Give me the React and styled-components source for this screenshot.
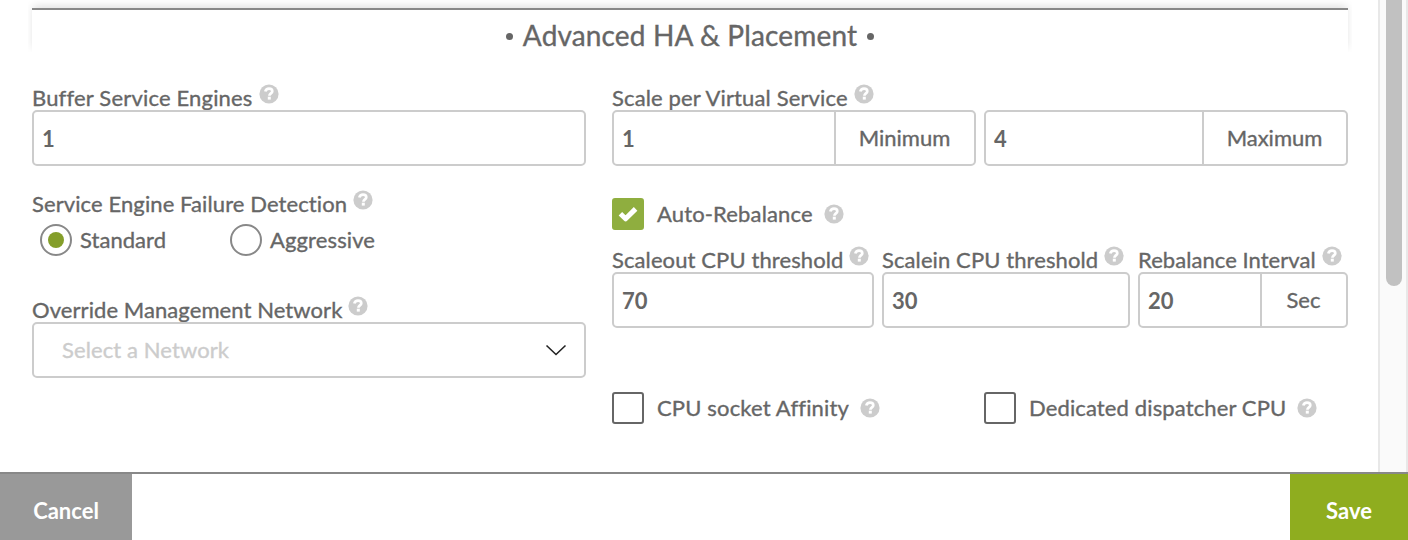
import React from "react";
import styled, { createGlobalStyle } from "styled-components";

const Global = createGlobalStyle`
  *, *::before, *::after { box-sizing: border-box; }
  body { margin: 0; background: #fff; color: #666; font: 22px/28px Lato, "Liberation Sans", sans-serif; overflow: hidden; }
`;

const Modal = styled.div`
  display: flex;
  flex-direction: column;
  height: 540px;
  width: 1408px;
`;
const Viewport = styled.div`
  display: flex;
  height: 472px;
`;
const Content = styled.main`
  width: 1378px;
  padding: 8px 30px 0 32px;
  overflow: hidden;
`;
const SectionTitle = styled.h2`
  display: flex;
  justify-content: center;
  align-items: center;
  gap: 10px;
  height: 44px;
  margin: 0;
  padding-top: 8px;
  border-top: 2px solid #888;
  background: #fff;
  box-shadow: 0 -3px 8px -1px rgba(0, 0, 0, 0.13);
  clip-path: inset(-8px -4px 0 -4px);
  font-size: 28px;
  font-weight: 400;
  line-height: 34px;
`;
const Bullet = styled.i`
  width: 7px;
  height: 7px;
  margin-top: 3px;
  border-radius: 50%;
  background: #666;
`;
const Columns = styled.div`
  display: grid;
  grid-template-columns: 554px 736px;
  column-gap: 26px;
  padding-top: 30px;
`;
const Column = styled.div`
  display: flex;
  flex-direction: column;
`;
const Row = styled.div`
  display: flex;
  gap: 8px;
  margin-top: ${(p) => p.$top || 0}px;
`;
const Field = styled.div`
  width: ${(p) => (p.$width ? p.$width + "px" : "100%")};
  margin-top: ${(p) => p.$top || 0}px;
`;
const LabelRow = styled.div`
  display: flex;
  gap: 6px;
  height: 28px;
  overflow: hidden;
`;
const Text = styled.span`
  white-space: nowrap;
  letter-spacing: ${(p) => p.$track || 0}px;
  -webkit-text-stroke: 0.35px currentColor;
`;
const LabelText = styled(Text)`
  padding-top: 2px;
`;
const HelpSvg = styled.svg`
  flex: none;
  width: 20px;
  height: 20px;
  margin-top: ${(p) => p.$top || 0}px;
`;
const InputBox = styled.div`
  display: flex;
  width: ${(p) => (p.$width ? p.$width + "px" : "100%")};
  height: 56px;
  border: 2px solid #ccc;
  border-radius: 5px;
  background: #fff;
`;
const Value = styled.span`
  flex: 1;
  padding: 13px 8px 11px;
  font-weight: 700;
`;
const Addon = styled.span`
  width: ${(p) => p.$width}px;
  padding: 12px 1px 12px 0;
  border-left: 2px solid #ccc;
  text-align: center;
`;
const SelectBox = styled(InputBox)`
  align-items: center;
  justify-content: space-between;
  padding: 0 17px 0 28px;
  color: #ccc;
`;
const Chevron = styled.svg`
  width: 22px;
  height: 14px;
`;
const Option = styled.label`
  display: flex;
  align-items: center;
  width: ${(p) => p.$width}px;
  height: 32px;
`;
const OptionText = styled(Text)`
  margin: 0 11px 0 ${(p) => p.$left}px;
`;
const Radios = styled.div`
  display: flex;
  margin-top: 8px;
  padding-left: 8px;
`;
const Radio = styled.span`
  display: grid;
  place-items: center;
  width: 32px;
  height: 32px;
  border: 2px solid #888;
  border-radius: 50%;
  &::after {
    content: "";
    width: 16px;
    height: 16px;
    border-radius: 50%;
    background: ${(p) => (p.$on ? "#849e2a" : "transparent")};
  }
`;
const Check = styled.span`
  display: grid;
  place-items: center;
  width: 32px;
  height: 32px;
  border: 2px solid ${(p) => (p.$on ? "#8fae3f" : "#666")};
  border-radius: 3px;
  background: ${(p) => (p.$on ? "#8fae3f" : "#fff")};
`;
const Tick = styled.svg`
  width: 20px;
  height: 16px;
`;
const Track = styled.aside`
  width: 30px;
  padding: 0 4px 0 6px;
  border: solid #e8e8e8;
  border-width: 0 2px;
  background: #fafafa;
`;
const Thumb = styled.div`
  width: 16px;
  height: 286px;
  border-radius: 0 0 8px 8px;
  background: #c1c1c1;
`;
const Footer = styled.footer`
  display: flex;
  justify-content: space-between;
  height: 68px;
  border-top: 2px solid #888;
`;
const Button = styled.button`
  width: ${(p) => p.$width}px;
  padding: 7px 0 0;
  border: 0;
  background: ${(p) => (p.$primary ? "#8fad1f" : "#999")};
  color: #fff;
  font: 700 22px/28px Lato, sans-serif;
`;

const Help = ({ top }) => (
  <HelpSvg viewBox="0 0 20 20" $top={top}>
    <circle cx="10" cy="10" r="9.6" fill="#ccc" />
    <path d="M6.3 7.5C6.8 5.6 8.1 4.7 10 4.7c2 0 3.3 1 3.3 2.5 0 2.1-2.9 2.2-2.9 4.5" fill="none" stroke="#fff" strokeWidth="2.7" />
    <rect x="8.8" y="12.7" width="3" height="2.9" fill="#fff" />
  </HelpSvg>
);

const Label = ({ children, track }) => (
  <LabelRow>
    <LabelText $track={track}>{children}</LabelText>
    <Help top={2} />
  </LabelRow>
);

const Input = ({ value, width, addon, addonWidth }) => (
  <InputBox $width={width}>
    <Value>{value}</Value>
    {addon && (
      <Addon $width={addonWidth}>
        <Text>{addon}</Text>
      </Addon>
    )}
  </InputBox>
);

const Checkbox = ({ label, on, width, track }) => (
  <Option $width={width}>
    <Check $on={on}>
      {on && (
        <Tick viewBox="0 0 20 16">
          <path d="M2.4 7.8 7.6 12.8 17.6 2.9" fill="none" stroke="#fff" strokeWidth="5" strokeLinejoin="round" />
        </Tick>
      )}
    </Check>
    <OptionText $left={13} $track={track}>{label}</OptionText>
    <Help />
  </Option>
);

export default function App() {
  return (
    <Modal>
      <Global />
      <Viewport>
        <Content>
          <SectionTitle>
            <Bullet />
            <Text $track={0.15}>Advanced HA &amp; Placement</Text>
            <Bullet />
          </SectionTitle>
          <Columns>
            <Column>
              <Field>
                <Label track={0.18}>Buffer Service Engines</Label>
                <Input value="1" />
              </Field>
              <Field $top={22}>
                <Label track={0.1}>Service Engine Failure Detection</Label>
                <Radios>
                  <Option $width={190}>
                    <Radio $on />
                    <OptionText $left={8} $track={0.05}>Standard</OptionText>
                  </Option>
                  <Option $width={190}>
                    <Radio />
                    <OptionText $left={8} $track={0.12}>Aggressive</OptionText>
                  </Option>
                </Radios>
              </Field>
              <Field $top={38}>
                <Label track={0.08}>Override Management Network</Label>
                <SelectBox>
                  <Text $track={0.1}>Select a Network</Text>
                  <Chevron viewBox="0 0 22 14">
                    <path d="M1.5 2.5 11 11.5 20.5 2.5" fill="none" stroke="#222" strokeWidth="1.6" />
                  </Chevron>
                </SelectBox>
              </Field>
            </Column>
            <Column>
              <Field>
                <Label track={0.14}>Scale per Virtual Service</Label>
                <Row>
                  <Input value="1" width={364} addon="Minimum" addonWidth={140} />
                  <Input value="4" width={364} addon="Maximum" addonWidth={144} />
                </Row>
              </Field>
              <Row $top={32}>
                <Checkbox label="Auto-Rebalance" on width={364} track={0.15} />
              </Row>
              <Row $top={14}>
                <Field $width={262}>
                  <Label track={0.1}>Scaleout CPU threshold</Label>
                  <Input value="70" />
                </Field>
                <Field $width={248}>
                  <Label track={0.1}>Scalein CPU threshold</Label>
                  <Input value="30" />
                </Field>
                <Field $width={210}>
                  <Label track={0.06}>Rebalance Interval</Label>
                  <Input value="20" addon="Sec" addonWidth={86} />
                </Field>
              </Row>
              <Row $top={64}>
                <Checkbox label="CPU socket Affinity" width={364} track={0.16} />
                <Checkbox label="Dedicated dispatcher CPU" width={364} track={0.13} />
              </Row>
            </Column>
          </Columns>
        </Content>
        <Track>
          <Thumb />
        </Track>
      </Viewport>
      <Footer>
        <Button $width={132}>Cancel</Button>
        <Button $width={118} $primary>Save</Button>
      </Footer>
    </Modal>
  );
}
